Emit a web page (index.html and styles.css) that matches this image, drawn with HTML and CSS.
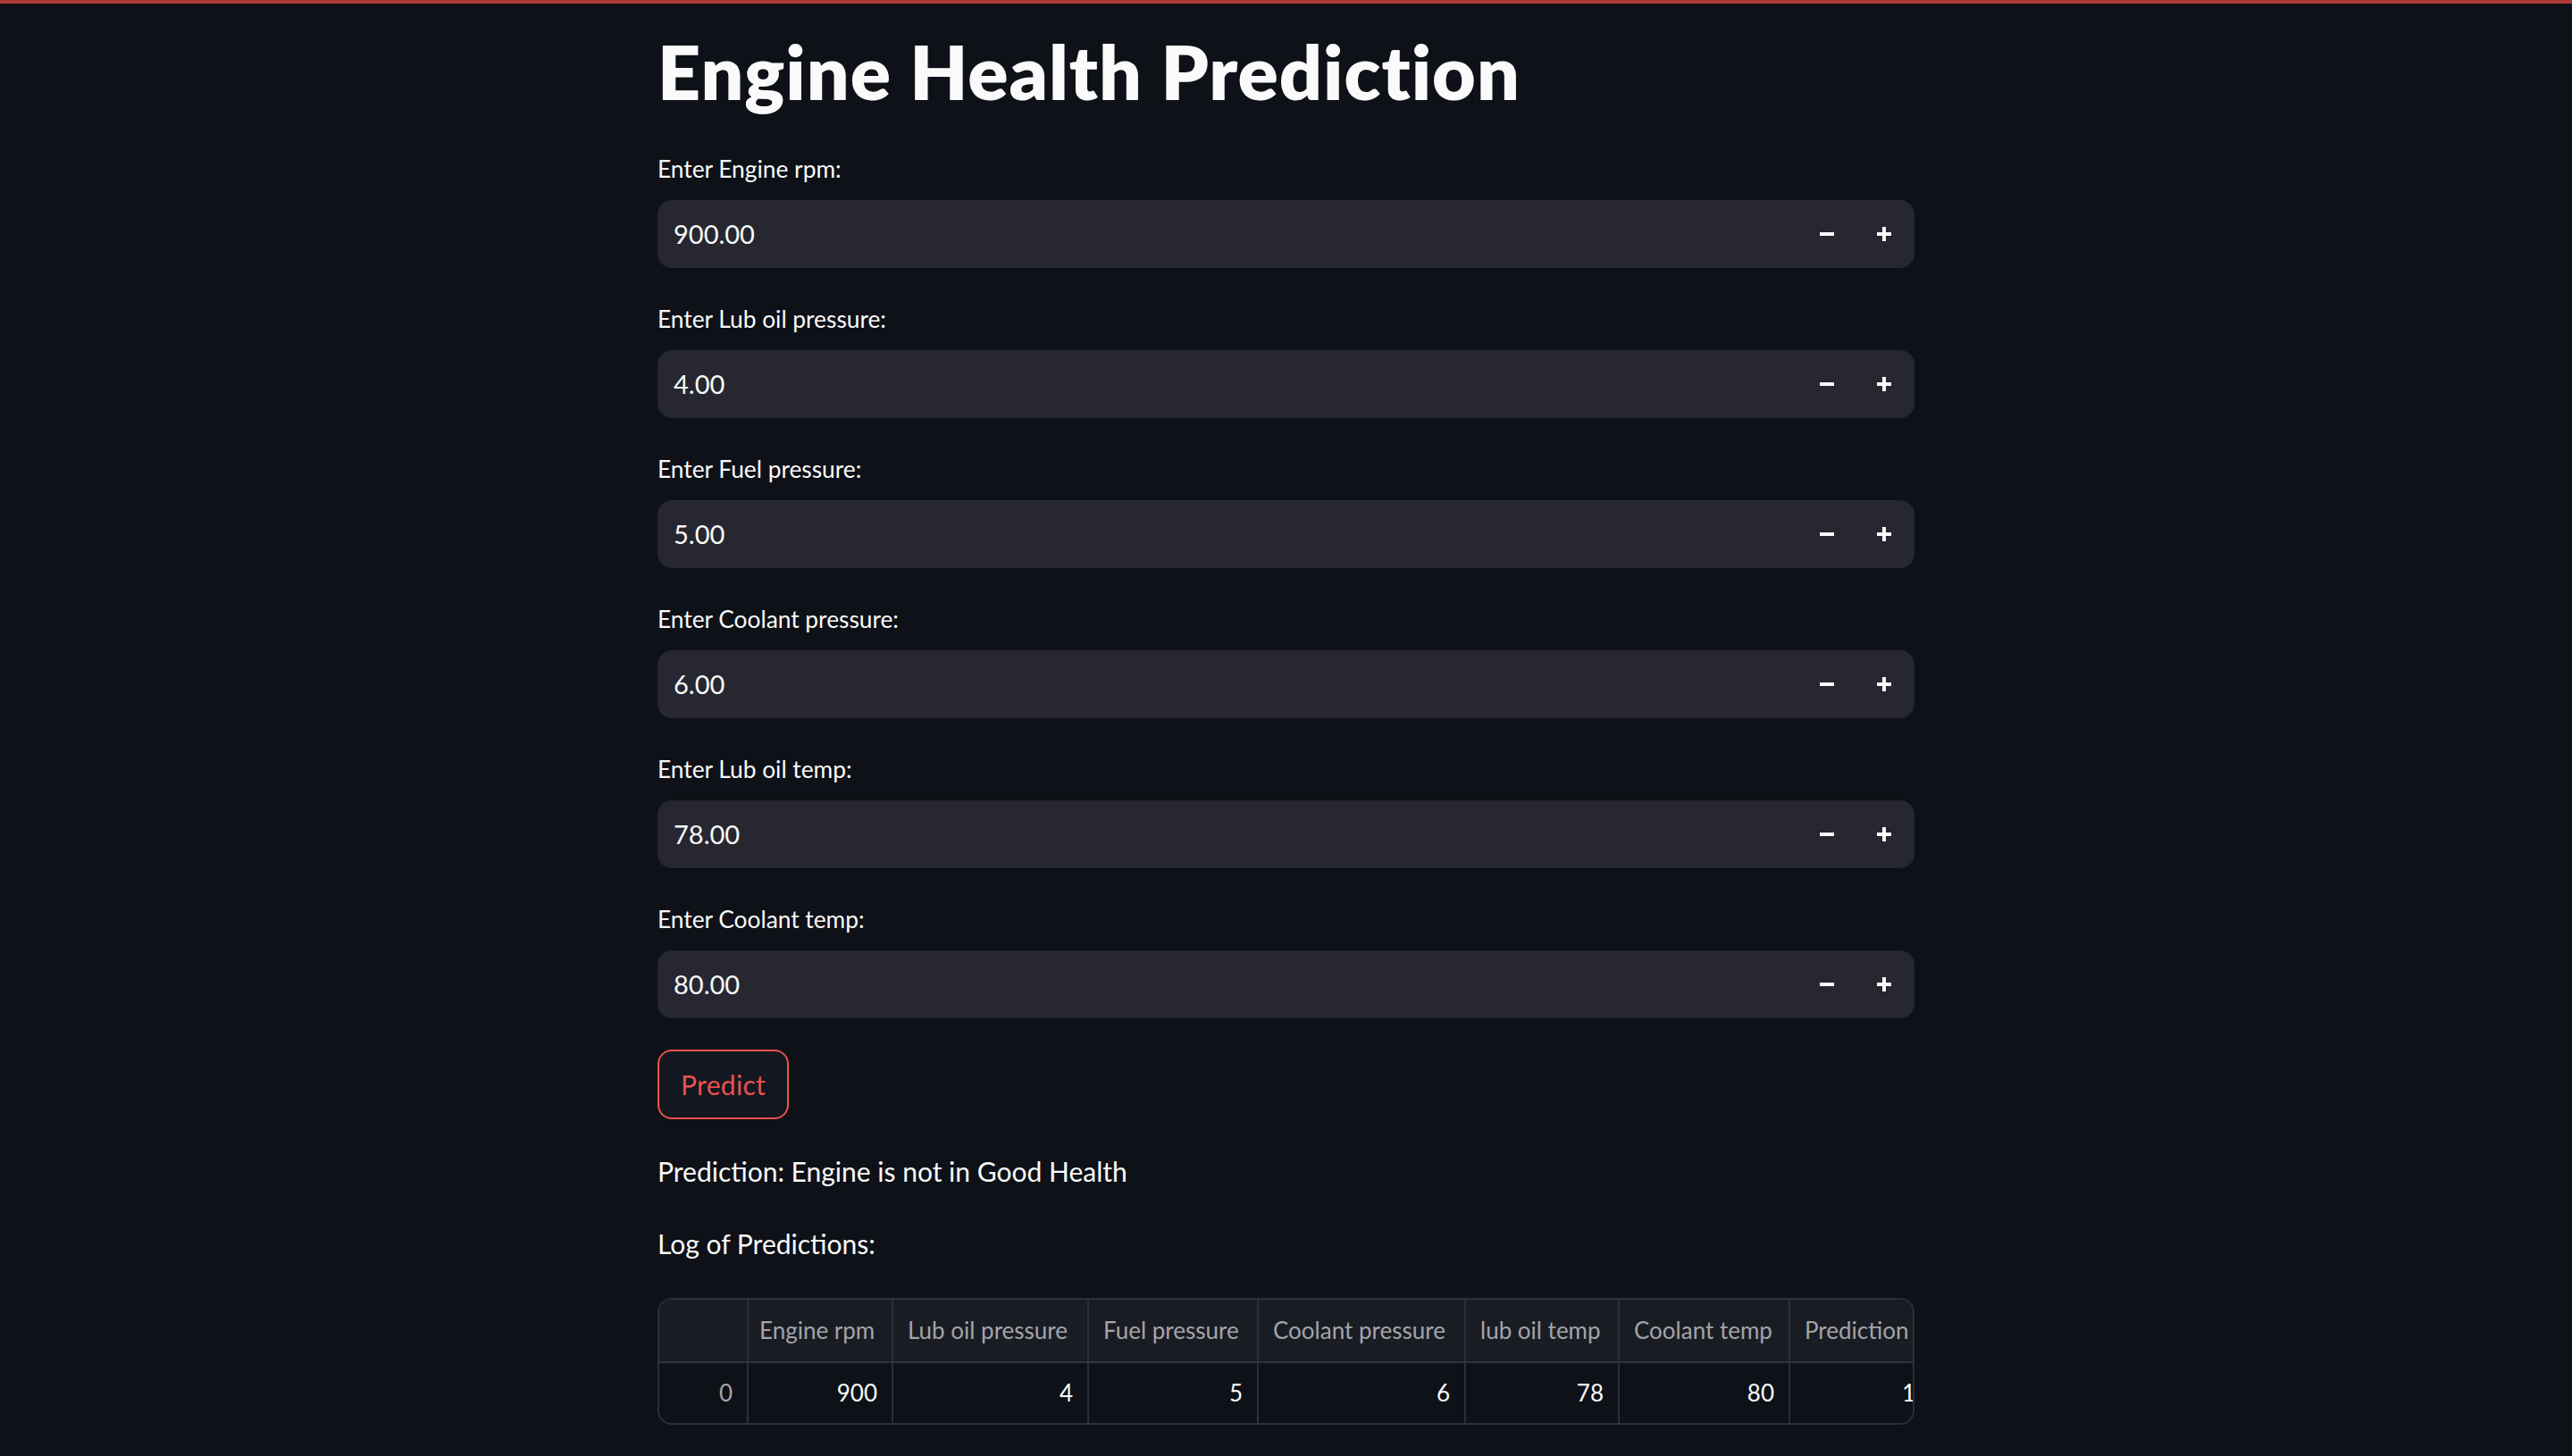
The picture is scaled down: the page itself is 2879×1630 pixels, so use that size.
FILE: index.html
```html
<!DOCTYPE html>
<html lang="en">
<head>
<meta charset="utf-8">
<title>Engine Health Prediction</title>
<link rel="stylesheet" href="styles.css">
</head>
<body>
<div class="topbar"></div>
<main class="container">
  <h1 class="title">Engine Health Prediction</h1>

  <div class="field">
    <label class="label">Enter Engine rpm:</label>
    <div class="numinput">
      <span class="value">900.00</span>
      <button class="step" aria-label="decrement"><svg width="16" height="16" viewBox="0 0 16 16"><rect x="0" y="6" width="16" height="4" fill="#fafafa"/></svg></button>
      <button class="step" aria-label="increment"><svg width="16" height="16" viewBox="0 0 16 16"><rect x="0" y="6" width="16" height="4" fill="#fafafa"/><rect x="6" y="0" width="4" height="16" fill="#fafafa"/></svg></button>
    </div>
  </div>

  <div class="field">
    <label class="label">Enter Lub oil pressure:</label>
    <div class="numinput">
      <span class="value">4.00</span>
      <button class="step" aria-label="decrement"><svg width="16" height="16" viewBox="0 0 16 16"><rect x="0" y="6" width="16" height="4" fill="#fafafa"/></svg></button>
      <button class="step" aria-label="increment"><svg width="16" height="16" viewBox="0 0 16 16"><rect x="0" y="6" width="16" height="4" fill="#fafafa"/><rect x="6" y="0" width="4" height="16" fill="#fafafa"/></svg></button>
    </div>
  </div>

  <div class="field">
    <label class="label">Enter Fuel pressure:</label>
    <div class="numinput">
      <span class="value">5.00</span>
      <button class="step" aria-label="decrement"><svg width="16" height="16" viewBox="0 0 16 16"><rect x="0" y="6" width="16" height="4" fill="#fafafa"/></svg></button>
      <button class="step" aria-label="increment"><svg width="16" height="16" viewBox="0 0 16 16"><rect x="0" y="6" width="16" height="4" fill="#fafafa"/><rect x="6" y="0" width="4" height="16" fill="#fafafa"/></svg></button>
    </div>
  </div>

  <div class="field">
    <label class="label">Enter Coolant pressure:</label>
    <div class="numinput">
      <span class="value">6.00</span>
      <button class="step" aria-label="decrement"><svg width="16" height="16" viewBox="0 0 16 16"><rect x="0" y="6" width="16" height="4" fill="#fafafa"/></svg></button>
      <button class="step" aria-label="increment"><svg width="16" height="16" viewBox="0 0 16 16"><rect x="0" y="6" width="16" height="4" fill="#fafafa"/><rect x="6" y="0" width="4" height="16" fill="#fafafa"/></svg></button>
    </div>
  </div>

  <div class="field">
    <label class="label">Enter Lub oil temp:</label>
    <div class="numinput">
      <span class="value">78.00</span>
      <button class="step" aria-label="decrement"><svg width="16" height="16" viewBox="0 0 16 16"><rect x="0" y="6" width="16" height="4" fill="#fafafa"/></svg></button>
      <button class="step" aria-label="increment"><svg width="16" height="16" viewBox="0 0 16 16"><rect x="0" y="6" width="16" height="4" fill="#fafafa"/><rect x="6" y="0" width="4" height="16" fill="#fafafa"/></svg></button>
    </div>
  </div>

  <div class="field">
    <label class="label">Enter Coolant temp:</label>
    <div class="numinput">
      <span class="value">80.00</span>
      <button class="step" aria-label="decrement"><svg width="16" height="16" viewBox="0 0 16 16"><rect x="0" y="6" width="16" height="4" fill="#fafafa"/></svg></button>
      <button class="step" aria-label="increment"><svg width="16" height="16" viewBox="0 0 16 16"><rect x="0" y="6" width="16" height="4" fill="#fafafa"/><rect x="6" y="0" width="4" height="16" fill="#fafafa"/></svg></button>
    </div>
  </div>

  <button class="predict">Predict</button>

  <p class="text text-first">Prediction: Engine is not in Good Health</p>
  <p class="text text-second">Log of Predictions:</p>

  <div class="table">
    <div class="row head">
      <div class="cell"></div>
      <div class="cell">Engine rpm</div>
      <div class="cell">Lub oil pressure</div>
      <div class="cell">Fuel pressure</div>
      <div class="cell">Coolant pressure</div>
      <div class="cell">lub oil temp</div>
      <div class="cell">Coolant temp</div>
      <div class="cell">Prediction</div>
    </div>
    <div class="row data">
      <div class="cell idx">0</div>
      <div class="cell">900</div>
      <div class="cell">4</div>
      <div class="cell">5</div>
      <div class="cell">6</div>
      <div class="cell">78</div>
      <div class="cell">80</div>
      <div class="cell">1</div>
    </div>
  </div>
</main>
</body>
</html>
```

FILE: styles.css
```css
html, body {
  margin: 0;
  padding: 0;
  background: #0e1117;
  color: #fafafa;
  font-family: Lato, "Liberation Sans", sans-serif;
}

.topbar {
  height: 4px;
  background: #b03a3a;
}

.container {
  width: 1407px;
  margin: 0 auto;
  padding-bottom: 40px;
  display: flex;
  flex-direction: column;
  align-items: flex-start;
}

.title {
  margin: 27px 0 0 0;
  font-size: 84px;
  line-height: 98px;
  font-weight: 800;
  letter-spacing: 1px;
  color: #fafafa;
}

.field {
  align-self: stretch;
  display: flex;
  flex-direction: column;
  margin-bottom: 33px;
}

.title + .field {
  margin-top: 36px;
}

.label {
  display: block;
  height: 48px;
  line-height: 48px;
  font-size: 26.3px;
  margin-bottom: 11px;
}

.numinput {
  height: 76px;
  box-sizing: border-box;
  border: 2px solid #262730;
  border-radius: 16px;
  background: #262730;
  display: flex;
  align-items: center;
}

.value {
  flex: 1;
  padding-left: 16px;
  font-size: 29px;
  line-height: 70px;
}

.step {
  width: 64px;
  height: 72px;
  border: 0;
  background: transparent;
  padding: 0;
  display: flex;
  align-items: center;
  justify-content: center;
}

.step svg {
  display: block;
}

.predict {
  margin-top: 2px;
  height: 78px;
  box-sizing: border-box;
  padding: 0 24px;
  border: 2px solid rgb(232, 82, 78);
  border-radius: 16px;
  background: rgb(19, 23, 32);
  color: rgb(232, 82, 78);
  font-family: Lato, "Liberation Sans", sans-serif;
  font-size: 30px;
  letter-spacing: 0.3px;
}

.text {
  margin: 0;
  font-size: 30px;
  line-height: 48px;
}

.text-first {
  margin-top: 34px;
}

.text-second {
  margin-top: 33px;
}

.table {
  margin-top: 37px;
  align-self: stretch;
  box-sizing: border-box;
  border: 2px solid #2d2f37;
  border-radius: 16px;
  overflow: hidden;
  font-size: 26px;
}

.row {
  display: grid;
  grid-template-columns: 100px 162px 219px 190px 232px 172px 191px 158px;
}

.head {
  background: #1a1c24;
  color: #a3a4a8;
  height: 71px;
  border-bottom: 2px solid #33353d;
  box-sizing: border-box;
}

.head .cell {
  text-align: left;
  line-height: 69px;
}

.data {
  height: 67px;
  background: #0e1117;
}

.data .cell {
  text-align: right;
  line-height: 67px;
}

.cell {
  box-sizing: border-box;
  border-right: 2px solid #2d2f37;
  padding: 0 16px;
  white-space: nowrap;
  overflow: hidden;
}

.head .cell:nth-child(2) {
  padding-left: 12px;
}

.idx {
  color: #a3a4a8;
}
```
